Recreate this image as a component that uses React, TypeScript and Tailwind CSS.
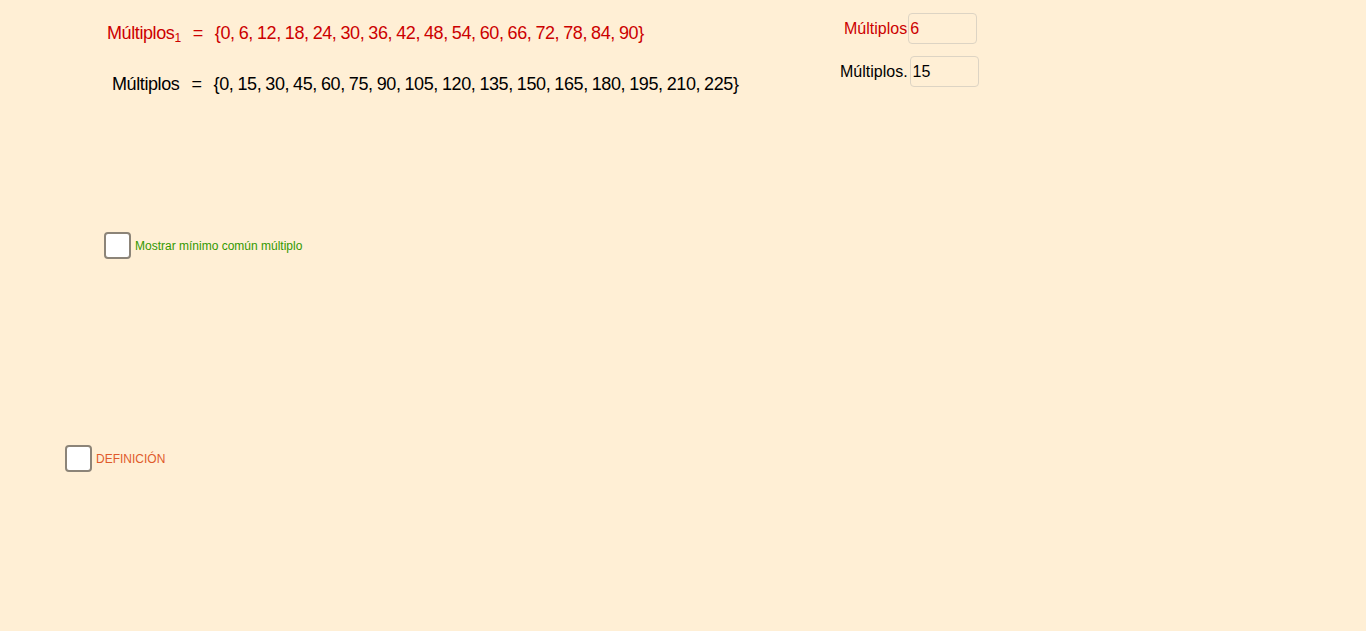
import React from "react";

const red = ["0", "6", "12", "18", "24", "30", "36", "42", "48", "54", "60", "66", "72", "78", "84", "90"];
const black = ["0", "15", "30", "45", "60", "75", "90", "105", "120", "135", "150", "165", "180", "195", "210", "225"];

function SetLine({ items }: { items: string[] }) {
  return (
    <span>
      {"{"}
      {items.map((n, i) => (
        <span key={i}>
          {n}
          {i < items.length - 1 && <span className="mr-[4px]">,</span>}
        </span>
      ))}
      {"}"}
    </span>
  );
}

function Check({ label, color }: { label: string; color: string }) {
  return (
    <div className="flex items-center gap-[4px]">
      <div className="h-[27px] w-[27px] rounded-[4px] border-2 border-[#8c8478] bg-white" />
      <span className={`text-[12px] ${color}`}>{label}</span>
    </div>
  );
}

export default function App() {
  return (
    <div
      className="relative h-[631px] w-[1366px] overflow-hidden bg-[#ffefd5]"
      style={{ fontFamily: '"Liberation Sans", Arial, sans-serif' }}
    >
      <div className="absolute left-[107px] top-[20px] text-[18px] tracking-[-0.4px] text-[#cc0000]">
        Múltiplos<sub className="text-[12px]">1</sub>
        <span className="mx-[12px]">=</span>
        <SetLine items={red} />
      </div>
      <div className="absolute left-[112px] top-[71px] text-[18px] tracking-[-0.4px] text-black">
        Múltiplos
        <span className="mx-[12px]">=</span>
        <SetLine items={black} />
      </div>

      <div className="absolute left-[844px] top-[13px] flex items-center">
        <span className="text-[16px] text-[#cc0000]">Múltiplos</span>
        <div className="ml-[1px] flex h-[31px] w-[69px] items-center rounded-[4px] border border-[#ddd4c4] px-[1px] text-[16px] text-[#cc0000]">
          6
        </div>
      </div>
      <div className="absolute left-[840px] top-[56px] flex items-center">
        <span className="text-[16px] text-black">Múltiplos.</span>
        <div className="ml-[2px] flex h-[31px] w-[69px] items-center rounded-[4px] border border-[#ddd4c4] px-[2px] text-[16px] text-black">
          15
        </div>
      </div>

      <div className="absolute left-[104px] top-[232px]">
        <Check label="Mostrar mínimo común múltiplo" color="text-[#339900]" />
      </div>
      <div className="absolute left-[65px] top-[445px]">
        <Check label="DEFINICIÓN" color="text-[#e05a2b]" />
      </div>
    </div>
  );
}
